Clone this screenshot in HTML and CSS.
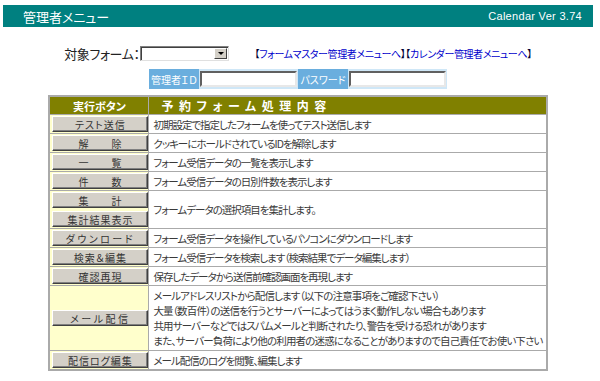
FILE: index.html
```html
<!DOCTYPE html>
<html lang="ja">
  <head>
    <meta charset="UTF-8" />
    <title>管理者メニュー</title>
    <link rel="stylesheet" href="styles.css">
  </head>
  <body>
    <div class="topbar">
      <span class="title">管理者メニュー</span>
      <span class="ver">Calendar Ver 3.74</span>
    </div>

    <form class="target-row">
      <label for="form">対象フォーム：</label>
      <span class="select-wrap">
        <select id="form" name="form"><option></option></select>
        <span class="select-arrow"></span>
      </span>
      <span class="links">
        【<a href="#">フォームマスター管理者メニューへ</a>】【<a href="#">カレンダー管理者メニューへ</a>】
      </span>
    </form>

    <table class="login">
      <tr>
        <th>管理者ＩＤ</th>
        <td><input type="text" name="id" /></td>
        <th>パスワード</th>
        <td><input type="password" name="pass" /></td>
      </tr>
    </table>

    <table class="menu">
      <tr>
        <th class="col-btn">実行ボタン</th>
        <th class="col-desc">予 約 フ ォ ー ム 処 理 内 容</th>
      </tr>
      <tr>
        <td class="btn-cell"><button type="button">テスト送信</button></td>
        <td>初期設定で指定したフォームを使ってテスト送信します</td>
      </tr>
      <tr>
        <td class="btn-cell"><button type="button">解　　除</button></td>
        <td>クッキーにホールドされているIDを解除します</td>
      </tr>
      <tr>
        <td class="btn-cell"><button type="button">一　　覧</button></td>
        <td>フォーム受信データの一覧を表示します</td>
      </tr>
      <tr>
        <td class="btn-cell"><button type="button">件　　数</button></td>
        <td>フォーム受信データの日別件数を表示します</td>
      </tr>
      <tr>
        <td class="btn-cell">
          <button type="button">集　　計</button>
          <button type="button">集計結果表示</button>
        </td>
        <td>フォームデータの選択項目を集計します。</td>
      </tr>
      <tr>
        <td class="btn-cell"><button type="button" class="wide">ダウンロード</button></td>
        <td>フォーム受信データを操作しているパソコンにダウンロードします</td>
      </tr>
      <tr>
        <td class="btn-cell"><button type="button">検索＆編集</button></td>
        <td>フォーム受信データを検索します（検索結果でデータ編集します）</td>
      </tr>
      <tr>
        <td class="btn-cell"><button type="button">確認再現</button></td>
        <td>保存したデータから送信前確認画面を再現します</td>
      </tr>
      <tr>
        <td class="btn-cell"><button type="button" class="wide">メール配信</button></td>
        <td class="multi">
          メールアドレスリストから配信します（以下の注意事項をご確認下さい）<br>
          大量（数百件）の送信を行うとサーバーによってはうまく動作しない場合もあります<br>
          共用サーバーなどではスパムメールと判断されたり、警告を受ける恐れがあります<br>
          また、サーバー負荷により他の利用者の迷惑になることがありますので自己責任でお使い下さい
        </td>
      </tr>
      <tr>
        <td class="btn-cell"><button type="button">配信ログ編集</button></td>
        <td>メール配信のログを閲覧、編集します</td>
      </tr>
    </table>
  </body>
</html>
```

FILE: styles.css
```css
* {
  margin: 0;
  padding: 0;
  box-sizing: border-box;
}

body {
  font-family: "Noto Sans CJK JP", sans-serif;
  font-feature-settings: "palt";
  font-size: 11px;
  color: #333;
  background-color: #fff;
  padding: 5px 7px 0 3px;
}

.topbar {
  display: flex;
  justify-content: space-between;
  align-items: center;
  height: 22px;
  background-color: #008080;
  color: #fff;
  padding: 0 11px 0 20px;
}

.topbar .title {
  font-size: 13px;
}

.topbar .ver {
  font-family: "Liberation Sans", Arial, sans-serif;
  font-size: 11px;
  letter-spacing: 0.3px;
}

/* form select + links */
.target-row {
  display: flex;
  justify-content: center;
  align-items: center;
  height: 15px;
  margin-top: 19px;
  white-space: nowrap;
}

.target-row label {
  font-size: 13px;
  letter-spacing: -0.4px;
  color: #222;
}

.select-wrap {
  position: relative;
  display: inline-block;
  width: 89px;
  height: 15px;
}

.select-wrap select {
  appearance: none;
  display: block;
  width: 100%;
  height: 100%;
  background-color: #fff;
  border: 1px solid;
  border-color: #808080 #e0e0e0 #e0e0e0 #808080;
  box-shadow: inset 1px 1px #404040;
}

.select-arrow {
  position: absolute;
  top: 2px;
  right: 2px;
  width: 13px;
  height: 11px;
  background-color: #d4d0c8;
  border: 1px solid;
  border-color: #fff #404040 #404040 #fff;
  pointer-events: none;
}

.select-arrow::after {
  content: "";
  position: absolute;
  left: 3px;
  top: 3px;
  border-left: 3px solid transparent;
  border-right: 3px solid transparent;
  border-top: 3px solid #000;
}

.links {
  margin-left: 26px;
  font-size: 10px;
  letter-spacing: -0.4px;
  color: #000033;
}

.links a {
  color: #0000cc;
  text-decoration: none;
}

/* login box */
.login {
  margin: 8px auto 0;
  border-collapse: collapse;
  background-color: #cfe7f7;
}

.login th {
  width: 50px;
  height: 20px;
  background-color: #6aaede;
  color: #fff;
  font-weight: normal;
  font-size: 10px;
  white-space: nowrap;
}

.login td {
  padding: 2px 1px;
}

.login input {
  display: block;
  width: 97px;
  height: 16px;
  border: 2px solid;
  border-color: #606060 #e8e8e8 #e8e8e8 #606060;
  background-color: #fff;
}

/* menu table */
.menu {
  width: 497px;
  margin: 6px auto 0;
  border-collapse: collapse;
  border: 2px solid #aaa;
}

.menu th {
  height: 18px;
  background-color: #808000;
  color: #fff;
  font-size: 12px;
  border: 1px solid #aaa;
}

.menu .col-btn {
  width: 100px;
  text-align: center;
  font-size: 11px;
}

.menu .col-desc {
  text-align: left;
  padding-left: 12px;
  letter-spacing: 1.4px;
}

.menu td {
  height: 19px;
  border: 1px solid #aaa;
  padding: 0 3px 0 4px;
  font-size: 10.5px;
  letter-spacing: -1px;
  line-height: 15px;
  white-space: nowrap;
  color: #3a3a3a;
  background-color: #fff;
}

.menu td.btn-cell {
  background-color: #ffffcc;
  padding: 1px 0 1px 2px;
  letter-spacing: 0;
  vertical-align: middle;
}

.menu td.multi {
  padding: 2px 3px 2px 4px;
  letter-spacing: -0.85px;
}

.btn-cell button {
  display: block;
  width: 96px;
  height: 16px;
  font-family: inherit;
  font-feature-settings: "palt";
  font-size: 10px;
  letter-spacing: 1px;
  color: #333;
  background-color: #d4d0c8;
  border: 1px solid;
  border-color: #fff #404040 #404040 #fff;
  box-shadow: inset -1px -1px #808080;
}

.btn-cell button + button {
  margin-top: 3px;
}

.btn-cell button.wide {
  letter-spacing: 2.5px;
}
```
